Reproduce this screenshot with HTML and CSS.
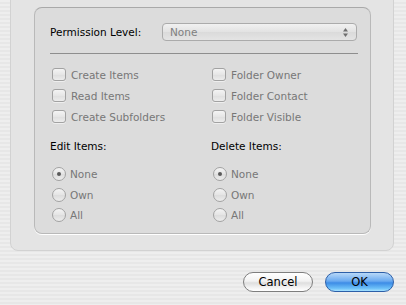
FILE: index.html
```html
<!DOCTYPE html>
<html lang="en">

<head>
    <meta charset="UTF-8">
    <meta name="viewport" content="width=device-width, initial-scale=1.0">
    <title>Permissions</title>
    <link rel="stylesheet" href="styles.css">
</head>

<body>
    <div class="outer-box">
        <div class="inner-box">
            <div class="perm-row">
                <span class="perm-label">Permission Level:</span>
                <div class="popup">
                    <span>None</span>
                    <svg class="popup-arrows" width="7" height="11" viewBox="0 0 7 11">
                        <path d="M3.5 1 L6 4.5 L1 4.5 Z" fill="#6e6e6e" />
                        <path d="M3.5 10 L6 6.5 L1 6.5 Z" fill="#6e6e6e" />
                    </svg>
                </div>
            </div>

            <div class="separator"></div>

            <div class="check-grid">
                <div class="check-item"><span class="checkbox"></span>Create Items</div>
                <div class="check-item"><span class="checkbox"></span>Folder Owner</div>
                <div class="check-item"><span class="checkbox"></span>Read Items</div>
                <div class="check-item"><span class="checkbox"></span>Folder Contact</div>
                <div class="check-item"><span class="checkbox"></span>Create Subfolders</div>
                <div class="check-item"><span class="checkbox"></span>Folder Visible</div>
            </div>

            <div class="radio-groups">
                <div class="radio-group">
                    <div class="group-title">Edit Items:</div>
                    <div class="radio-item"><span class="radio selected"></span>None</div>
                    <div class="radio-item"><span class="radio"></span>Own</div>
                    <div class="radio-item"><span class="radio"></span>All</div>
                </div>
                <div class="radio-group">
                    <div class="group-title">Delete Items:</div>
                    <div class="radio-item"><span class="radio selected"></span>None</div>
                    <div class="radio-item"><span class="radio"></span>Own</div>
                    <div class="radio-item"><span class="radio"></span>All</div>
                </div>
            </div>
        </div>
    </div>

    <div class="buttons">
        <button class="btn btn-cancel">Cancel</button>
        <button class="btn btn-ok">OK</button>
    </div>
</body>

</html>
```

FILE: styles.css
```css
* {
    margin: 0;
    padding: 0;
    box-sizing: border-box;
}

body {
    font-family: "DejaVu Sans", sans-serif;
    font-size: 10.5px;
    width: 406px;
    height: 305px;
    overflow: hidden;
    background-color: #ececec;
    background-image: repeating-linear-gradient(to bottom, #eeeeee 0, #eeeeee 2px, #e7e7e7 2px, #e7e7e7 4px);
}

.outer-box {
    margin: -12px 0 0 10px;
    width: 384px;
    height: 263px;
    padding: 18px 0 0 23px;
    background-color: #e4e4e4;
    border: 1px solid #d2d2d2;
    border-radius: 8px;
}

.inner-box {
    width: 337px;
    height: 227px;
    padding: 15px 12px 0 15px;
    background-color: #dcdcdc;
    border: 1px solid #b9b9b9;
    border-top-color: #a9a9a9;
    border-radius: 8px;
    box-shadow: 0 1px 0 #ffffff;
}

.perm-row {
    display: flex;
    align-items: center;
    height: 18px;
}

.perm-label {
    width: 112px;
    color: #000;
}

.popup {
    width: 195px;
    height: 18px;
    display: flex;
    align-items: center;
    justify-content: space-between;
    padding: 0 7px 0 7px;
    color: #808080;
    border: 1px solid #ababab;
    border-radius: 4px;
    background: linear-gradient(to bottom, #f1f1f1, #e2e2e2 50%, #dadada 51%, #e4e4e4);
}

.separator {
    margin-top: 12px;
    height: 1px;
    background-color: #8e8e8e;
}

.check-grid {
    display: grid;
    grid-template-columns: 160px 1fr;
    grid-auto-rows: 21px;
    margin-top: 10px;
    padding-left: 2px;
}

.check-item,
.radio-item {
    display: flex;
    align-items: center;
    color: #777777;
}

.checkbox {
    width: 14px;
    height: 13px;
    margin-right: 5px;
    border: 1px solid #a2a2a2;
    border-radius: 3px;
    background: linear-gradient(to bottom, #f4f4f4, #e6e6e6 50%, #dedede 51%, #ececec);
    box-shadow: 0 1px 0 rgba(255, 255, 255, 0.5);
}

.radio-groups {
    display: grid;
    grid-template-columns: 161px 1fr;
    margin-top: 12px;
}

.group-title {
    height: 14px;
    line-height: 14px;
    color: #000;
    margin-bottom: 11px;
}

.radio-item {
    height: 20.5px;
    padding-left: 2px;
}

.radio {
    width: 14px;
    height: 14px;
    margin-right: 4px;
    border: 1px solid #a2a2a2;
    border-radius: 50%;
    background: linear-gradient(to bottom, #f4f4f4, #e4e4e4 50%, #dcdcdc 51%, #ececec);
    display: flex;
    align-items: center;
    justify-content: center;
}

.radio.selected::after {
    content: "";
    width: 4px;
    height: 4px;
    border-radius: 50%;
    background-color: #5a5a5a;
}

.buttons {
    display: flex;
    justify-content: flex-end;
    gap: 12px;
    margin-top: 21px;
    padding-right: 12px;
}

.btn {
    height: 20px;
    border-radius: 10px;
    font-family: "DejaVu Sans", sans-serif;
    font-size: 11.5px;
    color: #000;
    border: 1px solid #7e7e7e;
}

.btn-cancel {
    width: 70px;
    background: linear-gradient(to bottom, #ffffff, #f2f2f2 45%, #dedede 55%, #f6f6f6 85%, #ffffff);
}

.btn-ok {
    width: 69px;
    border-color: #2d5fa8;
    background: linear-gradient(to bottom, #b8d8f8, #6aaaf0 45%, #3d8ce6 55%, #6cc0f8 85%, #a6e2ff);
}
```
